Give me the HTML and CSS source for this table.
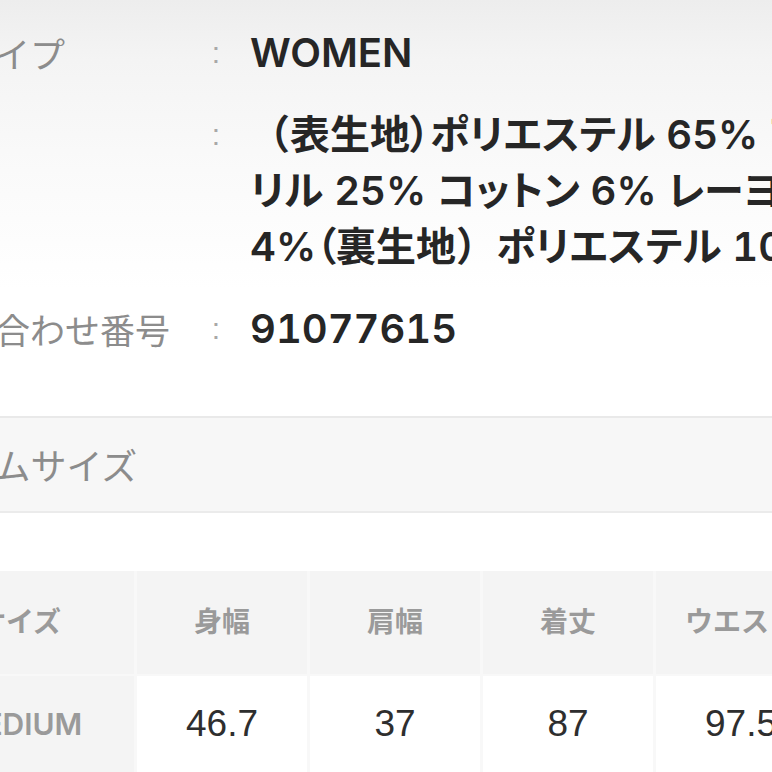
FILE: index.html
```html
<!DOCTYPE html>
<html lang="ja">
<head>
<meta charset="utf-8">
<title>商品詳細</title>
<link rel="stylesheet" href="styles.css">
</head>
<body>
<div class="page">
  <dl class="spec">
    <div class="row">
      <dt class="label">性別タイプ</dt>
      <dd class="colon">:</dd>
      <dd class="val">WOMEN</dd>
    </div>
    <div class="row">
      <dt class="label">素材</dt>
      <dd class="colon">:</dd>
      <dd class="val">
        <span class="line"><span class="fw">（</span>表生地）ポリエステル 65% アク</span>
        <span class="line">リル 25% コットン 6% レーヨン</span>
        <span class="line">4%（裏生地<span class="fw">）</span>ポリエステル 100%</span>
      </dd>
    </div>
    <div class="row">
      <dt class="label">お問い合わせ番号</dt>
      <dd class="colon">:</dd>
      <dd class="val">91077615</dd>
    </div>
  </dl>

  <div class="section-head">アイテムサイズ</div>

  <div class="size-table">
    <div class="cell head first">サイズ</div>
    <div class="cell head">身幅</div>
    <div class="cell head">肩幅</div>
    <div class="cell head">着丈</div>
    <div class="cell head">ウエスト</div>
    <div class="cell size first">MEDIUM</div>
    <div class="cell num">46.7</div>
    <div class="cell num">37</div>
    <div class="cell num">87</div>
    <div class="cell num">97.5</div>
  </div>
</div>
</body>
</html>
```

FILE: styles.css
```css
html, body {
  margin: 0;
  padding: 0;
}

body {
  width: 772px;
  height: 772px;
  overflow: hidden;
  background: linear-gradient(#ededed 0px, #f4f4f4 60px, #fafafa 170px, #ffffff 290px);
  font-family: "Noto Sans CJK JP", sans-serif;
}

.page {
  margin-left: -110px;
  width: 1000px;
  padding-top: 25px;
}

.spec {
  margin: 0;
  display: flex;
  flex-direction: column;
  gap: 26px;
}

.row {
  display: grid;
  grid-template-columns: 310px 32px 1fr;
  align-items: start;
}

.label {
  margin: 0;
  font-size: 35px;
  line-height: 56px;
  color: #8c8c8c;
  font-weight: 400;
  white-space: nowrap;
}

.colon {
  margin: 0;
  text-align: center;
  font-family: "Liberation Sans", sans-serif;
  font-size: 30px;
  line-height: 56px;
  color: #a8a8a8;
}

.val {
  margin: 0;
  padding-left: 18px;
  font-family: "Inter", "Noto Sans CJK JP", sans-serif;
  font-feature-settings: "palt", "tnum";
  font-size: 40px;
  font-weight: 600;
  line-height: 56px;
  color: #262626;
  white-space: nowrap;
}

.line {
  display: block;
}

.fw {
  font-feature-settings: "tnum";
}

.section-head {
  margin-top: 59px;
  height: 93px;
  border-top: 2px solid #e9e9e9;
  border-bottom: 2px solid #ebebeb;
  background: #f7f7f7;
  font-size: 36px;
  line-height: 93px;
  color: #8c8c8c;
  white-space: nowrap;
}

.size-table {
  margin-top: 58px;
  margin-left: 15px;
  display: grid;
  grid-template-columns: 229px 170px 170px 170px 170px;
  grid-template-rows: 103px 100px;
  gap: 2px 3px;
  background: #f8f8f8;
}

.cell {
  display: flex;
  align-items: center;
  justify-content: center;
  white-space: nowrap;
}

.head {
  background: #f4f4f4;
  padding-bottom: 6px;
  font-size: 28px;
  font-weight: 700;
  color: #9a9a9a;
}

.first {
  background: #f4f4f4;
}

.size {
  padding-bottom: 4px;
  font-family: "Inter", "Noto Sans CJK JP", sans-serif;
  font-size: 30px;
  font-weight: 600;
  color: #9a9a9a;
}

.num {
  background: #ffffff;
  padding-bottom: 4px;
  font-family: "Liberation Sans", sans-serif;
  font-size: 37px;
  color: #2e2e2e;
}
```
